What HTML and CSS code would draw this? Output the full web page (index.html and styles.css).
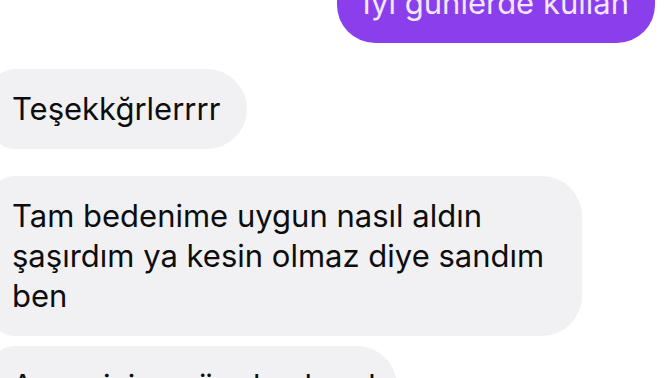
FILE: index.html
```html
<!DOCTYPE html>
<html lang="tr">
<head>
  <meta charset="UTF-8">
  <meta name="viewport" content="width=device-width, initial-scale=1.0">
  <title>Mesajlar</title>
  <link rel="stylesheet" href="styles.css">
</head>
<body>
  <div class="chat">
    <div class="msg out">İyi günlerde kullan</div>
    <div class="msg in first">Teşekkğrlerrrr</div>
    <div class="msg in middle">Tam bedenime uygun nasıl aldın<br>şaşırdım ya kesin olmaz diye sandım<br>ben</div>
    <div class="msg in last">Ama sizinse üç de almadı</div>
  </div>
</body>
</html>
```

FILE: styles.css
```css
body, html {
  margin: 0;
  padding: 0;
  background: #ffffff;
  font-family: Inter, "Noto Sans", sans-serif;
  overflow: hidden;
}

.chat {
  display: flex;
  flex-direction: column;
  margin-top: -37px;
  padding-right: 17px;
}

.msg {
  font-size: 31px;
  line-height: 40px;
  color: #0d0d0d;
}

.out {
  align-self: flex-end;
  background-color: #8a3eec;
  color: #f1e8ff;
  padding: 20px 26px;
  border-radius: 38px;
}

.in {
  align-self: flex-start;
  margin-left: -8px;
  background-color: #f1f1f4;
  padding: 20px 27px 20px 20px;
  border-radius: 22px 40px 40px 22px;
}

.first {
  margin-top: 26px;
}

.middle {
  margin-top: 27px;
  padding-right: 38px;
}

.last {
  margin-top: 10px;
  padding-right: 14px;
}
```
